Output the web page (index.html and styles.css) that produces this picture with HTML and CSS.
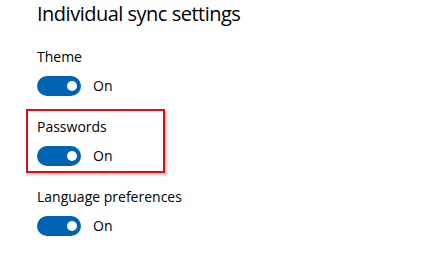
FILE: index.html
```html
<!DOCTYPE html>
<html>
<head>
<meta charset="utf-8">
<link rel="stylesheet" href="styles.css">
</head>
<body>
<div class="page">
  <h2 class="title">Individual sync settings</h2>
  <div class="setting">
    <div class="label">Theme</div>
    <div class="toggle-row"><span class="toggle"><span class="knob"></span></span><span class="state">On</span></div>
  </div>
  <div class="setting highlighted">
    <div class="label">Passwords</div>
    <div class="toggle-row"><span class="toggle"><span class="knob"></span></span><span class="state">On</span></div>
  </div>
  <div class="setting">
    <div class="label">Language preferences</div>
    <div class="toggle-row"><span class="toggle"><span class="knob"></span></span><span class="state">On</span></div>
  </div>
</div>
</body>
</html>
```
FILE: styles.css
```css
html, body {
  margin: 0;
  padding: 0;
  background: #ffffff;
}
body {
  font-family: "Open Sans", "Noto Sans", sans-serif;
  color: #000000;
  width: 432px;
  height: 264px;
  overflow: hidden;
}
.page {
  padding-left: 37px;
  display: flex;
  flex-direction: column;
  align-items: flex-start;
}
.title {
  margin: 0 0 11px 0;
  font-size: 20px;
  line-height: 28px;
  font-weight: 400;
  letter-spacing: -0.5px;
}
.setting {
  margin-left: -11px;
  margin-bottom: 6px;
  padding: 6px 9px 5px 9px;
  border: 2px solid transparent;
  width: 117px;
}
.setting.highlighted {
  border-color: #d9101c;
  box-shadow: 2px 2px 2px rgba(0, 0, 0, 0.22);
}
.label {
  font-size: 14px;
  line-height: 20px;
  white-space: nowrap;
}
.toggle-row {
  margin-top: 9px;
  display: flex;
  align-items: center;
  gap: 12px;
  height: 20px;
}
.toggle {
  width: 44px;
  height: 20px;
  border-radius: 10px;
  background: #0063b1;
  display: flex;
  align-items: center;
  justify-content: flex-end;
  padding-right: 4px;
  box-sizing: border-box;
}
.knob {
  width: 10px;
  height: 10px;
  border-radius: 50%;
  background: #ffffff;
}
.state {
  font-size: 14px;
  line-height: 20px;
}
```
